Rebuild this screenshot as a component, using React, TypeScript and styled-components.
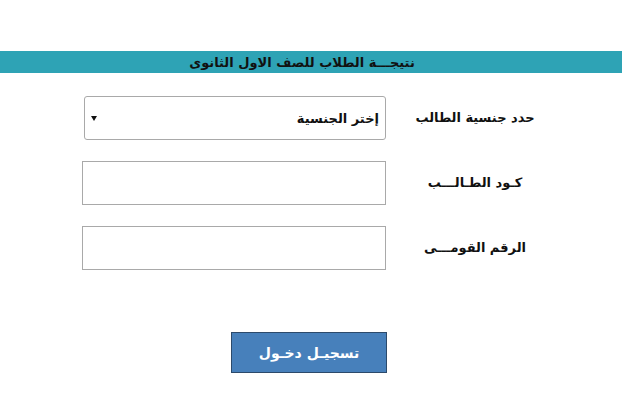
import React from "react";
import styled, { createGlobalStyle } from "styled-components";

const Global = createGlobalStyle`
  html, body { margin: 0; padding: 0; background: #ffffff; }
  body { font-family: "DejaVu Sans", "Liberation Sans", Arial, sans-serif; }
`;

const Page = styled.div`
  width: 622px;
  height: 419px;
  padding-top: 51px;
  box-sizing: border-box;
  display: flex;
  flex-direction: column;
`;

const TitleBar = styled.div`
  height: 22px;
  background: #2ea3b5;
  display: flex;
  align-items: center;
  justify-content: center;
  direction: rtl;
  font-weight: bold;
  font-size: 13px;
  color: #111;
  padding-right: 18px;
`;

const Form = styled.div`
  margin-top: 23px;
  display: grid;
  grid-template-columns: 84px 302px 178px;
  grid-auto-rows: 44px;
  row-gap: 21px;
  align-items: center;
`;

const Label = styled.div`
  grid-column: 3;
  text-align: center;
  direction: rtl;
  font-weight: bold;
  font-size: 13px;
  color: #111;
  padding-bottom: 2px;
`;

const Select = styled.div`
  grid-column: 2;
  height: 44px;
  box-sizing: border-box;
  border: 1px solid #a9a9a9;
  border-radius: 3px;
  display: flex;
  align-items: center;
  justify-content: space-between;
  padding: 0 6px 0 6px;
  background: #fff;
`;

const Arrow = styled.span`
  width: 0;
  height: 0;
  border-left: 3px solid transparent;
  border-right: 3px solid transparent;
  border-top: 5px solid #111;
`;

const SelectText = styled.span`
  direction: rtl;
  font-size: 13px;
  font-weight: bold;
  color: #111;
`;

const Input = styled.div`
  grid-column: 1 / 3;
  margin-left: 82px;
  height: 44px;
  box-sizing: border-box;
  border: 1px solid #a9a9a9;
  background: #fff;
`;

const ButtonRow = styled.div`
  margin-top: 62px;
  display: flex;
  padding-left: 231px;
`;

const Button = styled.div`
  width: 156px;
  height: 41px;
  box-sizing: border-box;
  background: #4780bb;
  border: 1px solid #2c4a6b;
  color: #fff;
  font-weight: bold;
  font-size: 14px;
  direction: rtl;
  display: flex;
  align-items: center;
  justify-content: center;
`;

export default function App() {
  return (
    <>
      <Global />
      <Page>
        <TitleBar>نتيجـــة الطلاب للصف الاول الثانوى</TitleBar>
        <Form>
          <Select>
            <Arrow />
            <SelectText>إختر الجنسية</SelectText>
          </Select>
          <Label>حدد جنسية الطالب</Label>
          <Input />
          <Label>كـود الطـالـــب</Label>
          <Input />
          <Label>الرقم القومـــى</Label>
        </Form>
        <ButtonRow>
          <Button>تسجيـل دخـول</Button>
        </ButtonRow>
      </Page>
    </>
  );
}
